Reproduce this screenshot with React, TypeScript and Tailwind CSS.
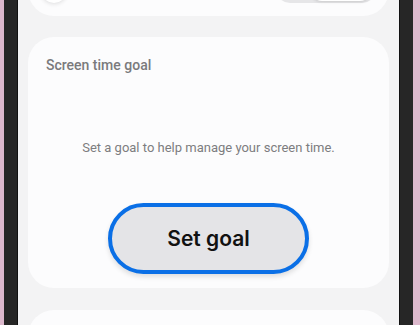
export default function App() {
  return (
    <div className="flex h-[325px] w-[420px] overflow-hidden bg-[#dcb8cc]">
      <div className="ml-[4px] flex w-[409px] bg-[#262626] px-[13px] py-0">
        <div className="flex w-full flex-col overflow-hidden border-x border-[#111] bg-[#f3f3f4] px-[10px] font-['Roboto',sans-serif]">
          {/* previous card, mostly scrolled out */}
          <div className="-mt-[60px] flex h-[76px] shrink-0 items-end justify-between rounded-[26px] bg-[#fcfcfd] px-[13px] pb-[13px]">
            <div className="h-[26px] w-[26px] rounded-full bg-white shadow-[0_1px_4px_rgba(0,0,0,0.12)]" />
            <div className="flex h-[28px] w-[100px] items-center justify-end rounded-full bg-[#e6e6e8] px-[4px]">
              <div className="h-[24px] w-[62px] rounded-full bg-white shadow-[0_1px_3px_rgba(0,0,0,0.12)]" />
            </div>
          </div>

          <div className="mt-[21px] flex h-[251px] shrink-0 flex-col rounded-[26px] bg-[#fcfcfd] px-[18px] pt-[18px]">
            <div className="text-[14px] font-medium leading-[20px] text-[#7a7a7c]">Screen time goal</div>
            <div className="mt-[64px] text-center text-[13px] leading-[18px] text-[#7d7d80]">
              Set a goal to help manage your screen time.
            </div>
            <div className="mt-[46px] flex justify-center">
              <button className="h-[71px] w-[201px] rounded-full border-[4px] border-[#0a6fe6] bg-[#e4e4e7] font-['Inter',sans-serif] text-[21px] font-semibold text-[#111] shadow-[0_3px_5px_rgba(0,0,0,0.12)]">
                Set goal
              </button>
            </div>
          </div>

          <div className="mt-[22px] h-[60px] shrink-0 rounded-[26px] bg-[#fcfcfd]" />
        </div>
      </div>
    </div>
  );
}
